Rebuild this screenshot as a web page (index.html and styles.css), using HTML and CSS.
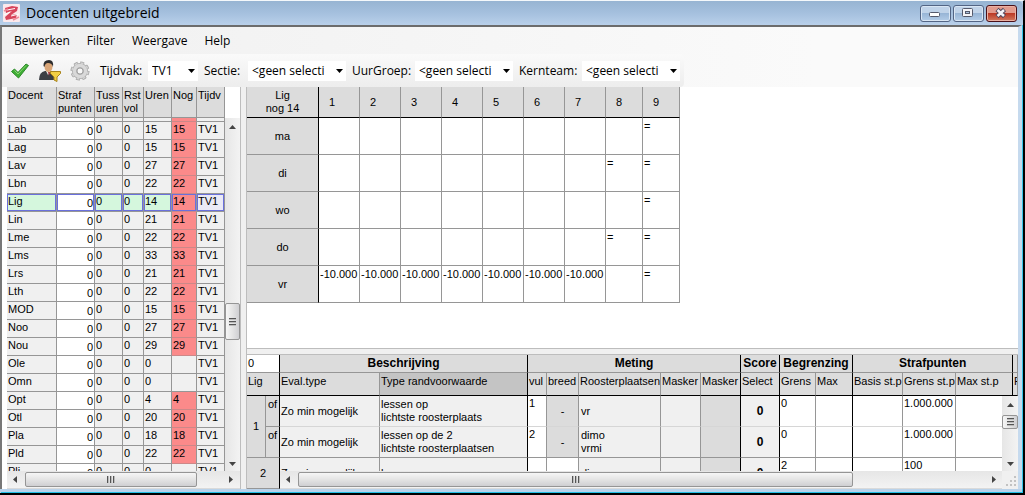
FILE: index.html
```html
<!DOCTYPE html>
<html lang="nl">
<head>
<meta charset="utf-8">
<title>Docenten uitgebreid</title>
<link rel="stylesheet" href="styles.css">
</head>
<body>
<div class="window">
  <header class="titlebar">
    <svg class="logo" viewBox="0 0 17 18" aria-hidden="true">
      <rect width="17" height="18" rx="1" fill="#fbe9ec"/>
      <path d="M2 4L9 2L15 3L14 7L8 11L14 10L13 14L3 16L2 13L9 7L3 9Z" fill="#d8455c"/>
      <path d="M1 11L7 8M8 12L16 10M4 6L12 4.500" stroke="#fff" stroke-width="1"/>
      <path d="M1 7L5 5M10 16L16 13" stroke="#ee8b9b" stroke-width="1.5"/>
    </svg>
    <h1 class="title">Docenten uitgebreid</h1>
    <div class="winbuttons">
      <button class="winbtn" aria-label="Minimaliseren"><svg viewBox="0 0 30 16"><rect x="9.500" y="7.500" width="10" height="4" rx="1" fill="#fff" stroke="#555a6c"/></svg></button>
      <button class="winbtn" aria-label="Maximaliseren"><svg viewBox="0 0 30 16"><rect x="9.500" y="3.500" width="10" height="8" rx="1" fill="#f4f4f8" stroke="#555a6c"/><rect x="12.500" y="6.500" width="4" height="2" fill="#a9c0dd" stroke="#555a6c"/></svg></button>
      <button class="winbtn winbtn-close" aria-label="Sluiten"><svg viewBox="0 0 30 16"><path d="M11 4.500L18.500 11.500M18.500 4.500L11 11.500" stroke="#51465a" stroke-width="4.500"/><path d="M11.500 5L18 11M18 5L11.500 11" stroke="#f4f4f8" stroke-width="2.500"/></svg></button>
    </div>
  </header>

  <div class="client">
    <nav class="menubar">
      <button class="menu">Bewerken</button>
      <button class="menu">Filter</button>
      <button class="menu">Weergave</button>
      <button class="menu">Help</button>
    </nav>

    <div class="toolrow">
      <div class="toolbar">
        <button class="tool" aria-label="Toepassen"><svg width="20" height="18" viewBox="0 0 20 18"><path d="M1.500 9.500L4.500 7L8 10.500L16 2L18.500 3.500L8.500 16Z" fill="#3fae35" stroke="#2d8a2a"/><path d="M4.500 8.500L8 12L16 3.500" fill="none" stroke="#86d66f"/></svg></button>
        <button class="tool" aria-label="Docent filteren"><svg width="24" height="24" viewBox="0 0 24 24"><path d="M1 21Q1 13 7 12L14 12Q18 13 18 21Z" fill="#3c3f45"/><path d="M8 12L10 16L13 12Z" fill="#e8e8e8"/><path d="M10 13L11 17L12 13Z" fill="#a33"/><ellipse cx="10.500" cy="7.500" rx="4" ry="5.500" fill="#d9a577"/><path d="M5.500 7Q5 1 11 1Q16 1 15 8Q14 4 10 4Q7 4 6.500 8Z" fill="#2c2b2c"/><path d="M12.500 12.500H22.500V14.500L19 18V22.500L16 21V18L12.500 14.500Z" fill="#f2cf45" stroke="#a8831a"/></svg></button>
        <button class="tool" aria-label="Instellingen"><svg width="20" height="20" viewBox="0 0 20 20"><circle cx="10" cy="10" r="8" fill="none" stroke="#a3a3a3" stroke-width="3" stroke-dasharray="3.800 2.483"/><circle cx="10" cy="10" r="5.500" fill="none" stroke="#a8a8a8" stroke-width="5"/><circle cx="10" cy="10" r="5.500" fill="none" stroke="#d9d9d9" stroke-width="3.500"/><circle cx="10" cy="10" r="8" fill="none" stroke="#d4d4d4" stroke-width="1.500" stroke-dasharray="2.800 3.483" stroke-dashoffset="-.5"/><circle cx="10" cy="10" r="3" fill="#f7f7f7" stroke="#a3a3a3"/></svg></button>
        <div class="pick pick-tijdvak"><label for="tijdvak">Tijdvak:</label><span class="combo"><select id="tijdvak"><option>TV1</option></select><svg viewBox="0 0 7 4"><path d="M0 0H7L3.500 4Z"/></svg></span></div>
        <div class="pick pick-sectie"><label for="sectie">Sectie:</label><span class="combo"><select id="sectie"><option>&lt;geen selecti</option></select><svg viewBox="0 0 7 4"><path d="M0 0H7L3.500 4Z"/></svg></span></div>
        <div class="pick pick-groep"><label for="groep">UurGroep:</label><span class="combo"><select id="groep"><option>&lt;geen selecti</option></select><svg viewBox="0 0 7 4"><path d="M0 0H7L3.500 4Z"/></svg></span></div>
        <div class="pick pick-groep"><label for="team">Kernteam:</label><span class="combo"><select id="team"><option>&lt;geen selecti</option></select><svg viewBox="0 0 7 4"><path d="M0 0H7L3.500 4Z"/></svg></span></div>
      </div>
    </div>

    <main class="panes">
      <section class="side">
        <div class="side-body">
          <table class="grid teachers">
            <colgroup><col class="c-doc"><col class="c-straf"><col class="c-tuss"><col class="c-rst"><col class="c-uren"><col class="c-nog"><col class="c-tijdv"></colgroup>
            <thead><tr><th>Docent</th><th>Straf<br>punten</th><th>Tuss<br>uren</th><th>Rst<br>vol</th><th>Uren</th><th>Nog</th><th>Tijdv</th></tr></thead>
            <tbody>
              <tr class="strip"><td></td><td></td><td></td><td></td><td></td><td class="red"></td><td></td></tr>
              <tr><td>Lab</td><td>0</td><td>0</td><td>0</td><td>15</td><td class="red">15</td><td>TV1</td></tr>
              <tr><td>Lag</td><td>0</td><td>0</td><td>0</td><td>15</td><td class="red">15</td><td>TV1</td></tr>
              <tr><td>Lav</td><td>0</td><td>0</td><td>0</td><td>27</td><td class="red">27</td><td>TV1</td></tr>
              <tr><td>Lbn</td><td>0</td><td>0</td><td>0</td><td>22</td><td class="red">22</td><td>TV1</td></tr>
              <tr class="selected"><td>Lig</td><td>0</td><td>0</td><td>0</td><td>14</td><td class="red">14</td><td>TV1</td></tr>
              <tr><td>Lin</td><td>0</td><td>0</td><td>0</td><td>21</td><td class="red">21</td><td>TV1</td></tr>
              <tr><td>Lme</td><td>0</td><td>0</td><td>0</td><td>22</td><td class="red">22</td><td>TV1</td></tr>
              <tr><td>Lms</td><td>0</td><td>0</td><td>0</td><td>33</td><td class="red">33</td><td>TV1</td></tr>
              <tr><td>Lrs</td><td>0</td><td>0</td><td>0</td><td>21</td><td class="red">21</td><td>TV1</td></tr>
              <tr><td>Lth</td><td>0</td><td>0</td><td>0</td><td>22</td><td class="red">22</td><td>TV1</td></tr>
              <tr><td>MOD</td><td>0</td><td>0</td><td>0</td><td>15</td><td class="red">15</td><td>TV1</td></tr>
              <tr><td>Noo</td><td>0</td><td>0</td><td>0</td><td>27</td><td class="red">27</td><td>TV1</td></tr>
              <tr><td>Nou</td><td>0</td><td>0</td><td>0</td><td>29</td><td class="red">29</td><td>TV1</td></tr>
              <tr><td>Ole</td><td>0</td><td>0</td><td>0</td><td>0</td><td></td><td>TV1</td></tr>
              <tr><td>Omn</td><td>0</td><td>0</td><td>0</td><td>0</td><td></td><td>TV1</td></tr>
              <tr><td>Opt</td><td>0</td><td>0</td><td>0</td><td>4</td><td class="red">4</td><td>TV1</td></tr>
              <tr><td>Otl</td><td>0</td><td>0</td><td>0</td><td>20</td><td class="red">20</td><td>TV1</td></tr>
              <tr><td>Pla</td><td>0</td><td>0</td><td>0</td><td>18</td><td class="red">18</td><td>TV1</td></tr>
              <tr><td>Pld</td><td>0</td><td>0</td><td>0</td><td>22</td><td class="red">22</td><td>TV1</td></tr>
              <tr><td>Pli</td><td>0</td><td>0</td><td>0</td><td>0</td><td></td><td>TV1</td></tr>
            </tbody>
          </table>
          <div class="vscroll vscroll-side">
            <svg class="arrow" viewBox="0 0 7 4"><path d="M0 4L3.500 0L7 4Z"/></svg>
            <div class="track side-track"><div class="vthumb side-thumb"><i></i><i></i><i></i></div></div>
            <svg class="arrow" viewBox="0 0 7 4"><path d="M0 0H7L3.500 4Z"/></svg>
          </div>
        </div>
        <div class="hscroll side-hscroll">
          <svg class="harrow" viewBox="0 0 4 7"><path d="M4 0V7L0 3.500Z"/></svg>
          <div class="htrack side-htrack"><div class="hthumb"><i></i><i></i><i></i></div></div>
          <svg class="harrow" viewBox="0 0 4 7"><path d="M0 0V7L4 3.500Z"/></svg>
        </div>
      </section>

      <div class="splitter"></div>

      <section class="content">
        <div class="roster">
          <table class="grid week">
            <colgroup><col class="w-day"><col class="w-hour" span="7"><col class="w-late" span="2"></colgroup>
            <thead><tr><th class="day">Lig<br>nog 14</th><th>1</th><th>2</th><th>3</th><th>4</th><th>5</th><th>6</th><th>7</th><th>8</th><th>9</th></tr></thead>
            <tbody>
              <tr><th class="day">ma</th><td></td><td></td><td></td><td></td><td></td><td></td><td></td><td></td><td>=</td></tr>
              <tr><th class="day">di</th><td></td><td></td><td></td><td></td><td></td><td></td><td></td><td>=</td><td>=</td></tr>
              <tr><th class="day">wo</th><td></td><td></td><td></td><td></td><td></td><td></td><td></td><td></td><td>=</td></tr>
              <tr><th class="day">do</th><td></td><td></td><td></td><td></td><td></td><td></td><td></td><td>=</td><td>=</td></tr>
              <tr><th class="day">vr</th><td>-10.000</td><td>-10.000</td><td>-10.000</td><td>-10.000</td><td>-10.000</td><td>-10.000</td><td>-10.000</td><td></td><td>=</td></tr>
            </tbody>
          </table>
        </div>

        <div class="hsplitter"></div>

        <div class="rules">
          <table class="grid rules-head">
            <colgroup><col class="r-num"><col class="r-eval"><col class="r-type"><col class="r-vul"><col class="r-breed"><col class="r-plaats"><col class="r-mask" span="2"><col class="r-score"><col class="r-grens"><col class="r-max"><col class="r-basis"><col class="r-gst"><col class="r-mst"><col></colgroup>
            <thead>
              <tr class="groups"><th class="count">0</th><th colspan="2" class="edge">Beschrijving</th><th colspan="5" class="edge">Meting</th><th class="edge">Score</th><th colspan="2" class="edge">Begrenzing</th><th colspan="3" class="edge">Strafpunten</th><th></th></tr>
              <tr class="names"><th class="edge">Lig</th><th>Eval.type</th><th class="edge sorted">Type randvoorwaarde</th><th>vul</th><th>breed</th><th>Roosterplaatsen</th><th>Masker</th><th class="edge">Masker</th><th class="edge">Select</th><th>Grens</th><th class="edge">Max</th><th>Basis st.p</th><th>Grens st.p</th><th class="edge">Max st.p</th><th>F</th></tr>
            </thead>
          </table>
          <div class="rules-body">
            <table class="grid numbers">
              <colgroup><col class="n-num"><col class="n-of"></colgroup>
              <tbody>
                <tr><th rowspan="2">1</th><th class="of edge">of</th></tr>
                <tr><th class="of edge">of</th></tr>
                <tr><th colspan="2" class="edge">2</th></tr>
              </tbody>
            </table>
            <div class="rules-main">
              <div class="rules-view">
                <div class="clip">
                  <table class="grid rules-rows">
                    <colgroup><col class="r-eval"><col class="r-type"><col class="r-vul"><col class="r-breed"><col class="r-plaats"><col class="r-mask" span="2"><col class="r-score"><col class="r-grens"><col class="r-max"><col class="r-basis"><col class="r-gst"><col></colgroup>
                    <tbody>
                      <tr class="soft"><td>Zo min mogelijk</td><td class="edge">lessen op<br>lichtste roosterplaats</td><td class="edit">1</td><td class="off">-</td><td class="place">vr</td><td></td><td class="off edge"></td><td class="score edge">0</td><td class="edit">0</td><td class="edit edge"></td><td class="edit"></td><td class="edit">1.000.000</td><td class="edit last"></td></tr>
                      <tr><td>Zo min mogelijk</td><td class="edge">lessen op de 2<br>lichtste roosterplaatsen</td><td class="edit">2</td><td class="off">-</td><td class="place">dimo<br>vrmi</td><td></td><td class="off edge"></td><td class="score edge">0</td><td class="edit">0</td><td class="edit edge"></td><td class="edit"></td><td class="edit">1.000.000</td><td class="edit last"></td></tr>
                      <tr><td>Zo min mogelijk</td><td class="edge">lessen</td><td class="edit"></td><td class="edit"></td><td class="place">di</td><td></td><td class="off edge"></td><td class="score edge">0</td><td class="edit">2</td><td class="edit edge"></td><td class="edit"></td><td class="edit">100</td><td class="edit last"></td></tr>
                    </tbody>
                  </table>
                </div>
                <div class="vscroll">
                  <svg class="arrow" viewBox="0 0 7 4"><path d="M0 4L3.500 0L7 4Z"/></svg>
                  <div class="track"><div class="vthumb"><i></i><i></i><i></i></div></div>
                  <svg class="arrow" viewBox="0 0 7 4"><path d="M0 0H7L3.500 4Z"/></svg>
                </div>
              </div>
              <div class="rules-foot">
                <div class="hscroll">
                  <svg class="harrow" viewBox="0 0 4 7"><path d="M4 0V7L0 3.500Z"/></svg>
                  <div class="htrack"><div class="hthumb rules-thumb"><i></i><i></i><i></i></div></div>
                  <svg class="harrow" viewBox="0 0 4 7"><path d="M0 0V7L4 3.500Z"/></svg>
                </div>
                <svg class="grip" viewBox="0 0 16 16" aria-hidden="true"><path d="M12 4h2v2h-2zM8 8h2v2h-2zM12 8h2v2h-2zM4 12h2v2h-2zM8 12h2v2h-2zM12 12h2v2h-2z"/></svg>
              </div>
            </div>
          </div>
        </div>
      </section>
    </main>
  </div>
</div>
</body>
</html>
```

FILE: styles.css
```css
* { box-sizing: border-box; }

body {
  margin: 0;
  background: #000;
  font: 11px/13px "Liberation Sans", Arial, sans-serif;
  color: #000;
}

button, select { font: inherit; color: inherit; }

/* Window frame */
.window {
  display: flex;
  flex-direction: column;
  height: 100vh;
  padding-bottom: 1px;
  border-top: 1px solid #f4f8fb;
  border-right: 2px solid #000;
  border-bottom: 2px solid #000;
  background: #b9d2ea;
}

.titlebar {
  display: flex;
  flex: none;
  align-items: center;
  height: 24px;
  padding: 0 6px 0 3px;
  border-radius: 0 5px 0 0;
  background: linear-gradient(#97b4d2, #a5c0de 50%, #b9d0ea);
}

.logo { width: 17px; height: 18px; }

.title {
  flex: 1;
  margin: 0 0 0 6px;
  font: 14px/20px "Open Sans", "Noto Sans", sans-serif;
}

.winbuttons { display: flex; gap: 2px; }

.winbtn {
  width: 31px;
  height: 17px;
  padding: 0;
  border: 1px solid #536585;
  border-radius: 3px;
  background: linear-gradient(#c0d3e9 45%, #98b5d6 50%, #b4cde8);
  box-shadow: inset 0 0 0 1px #d9e6f4;
}

.winbtn svg { display: block; width: 30px; height: 16px; margin: -1px; fill: none; }

.winbtn-close {
  border-color: #4a1018;
  background: linear-gradient(#e29a8c 45%, #bc3a26 50%, #d27a5e);
  box-shadow: inset 0 0 0 1px #eab0a2;
}

.client {
  display: flex;
  flex: 1;
  flex-direction: column;
  min-height: 0;
  margin-bottom: 3px;
  margin-right: 1px;
  border-top: 2px solid #6c6c6c;
  border-left: 2px solid #777;
  border-right: 4px solid #c6daee;
  background: #fff;
  box-shadow: 1px 0 #35c3e8, 0 3px #b9d2ea, 1px 4px #22bfe6;
}

/* Menu and toolbar */
.menubar {
  display: flex;
  flex: none;
  gap: 17px;
  height: 27px;
  padding-left: 12px;
  background: linear-gradient(90deg, #f0f0f0, #fafafa 80%);
}

.menu {
  padding: 0;
  border: 0;
  background: none;
  font: 12px/27px "Open Sans", "Noto Sans", sans-serif;
}

.toolrow {
  flex: none;
  background: linear-gradient(90deg, #f0f0f0, #fafafa 80%);
}

.toolbar {
  display: flex;
  align-items: center;
  gap: 6px;
  width: max-content;
  height: 33px;
  padding: 0 4px 0 6px;
  border-radius: 0 4px 4px 0;
  background: linear-gradient(#fafafa, #ededed);
  font: 12px/20px "Open Sans", "Noto Sans", sans-serif;
}

.tool {
  display: grid;
  place-items: center;
  width: 24px;
  height: 26px;
  padding: 0;
  border: 0;
  background: none;
}

.tool svg { display: block; }

.pick { display: flex; justify-content: space-between; align-items: center; }
.pick-tijdvak { width: 98px; margin-left: 2px; }
.pick-sectie { width: 142px; }
.pick-groep { width: 161px; }

.combo { display: flex; align-items: center; background: #fff; padding-right: 3px; }
.combo select {
  appearance: none;
  width: 84px;
  height: 20px;
  padding: 0 0 0 4px;
  border: 0;
  background: #fff;
}
.pick-tijdvak select { width: 36px; }
.combo svg { width: 7px; height: 4px; margin: 0 0 0 4px; }

/* Panes */
.panes { display: flex; flex: 1; min-height: 0; }

.side { display: flex; flex: none; flex-direction: column; padding-left: 5px; }
.side-body { display: flex; flex: 1; min-height: 0; overflow: hidden; }
.splitter { flex: none; width: 7px; border: solid #bdbdbd; border-width: 0 1px; background: #f0f0f0; }
.content { display: flex; flex: 1; flex-direction: column; min-width: 0; }

/* Shared grid look */
.grid { table-layout: fixed; border-collapse: separate; border-spacing: 0; }
.grid th, .grid td {
  padding: 0 1px;
  border: solid #969696;
  border-width: 0 1px 1px 0;
  font-weight: normal;
  text-align: left;
  white-space: nowrap;
  overflow: hidden;
}
.grid th { background: #dcdcdc; }
.grid .edge { border-right-color: #000; }

/* Teacher list */
.teachers { width: 218px; height: max-content; }
.teachers th { height: 31px; padding-top: 2px; vertical-align: top; }
.teachers td { height: 18px; padding-bottom: 2px; background: #f0f0f0; line-height: 15px; }
.teachers td:nth-child(2) { padding: 1px 1px 0 0; background: #fff; text-align: right; }
.teachers .strip td { height: 4px; padding: 0; line-height: 0; }
.teachers .red { background: #fb8a8a; border-bottom-color: #c88; }
.teachers .selected td { box-shadow: inset 0 0 0 1px #6a70dc; background: #d5f7dd; }
.teachers .selected td:nth-child(2) { background: #fff; }
.teachers .selected td:last-child { background: #eaeaf6; }
.teachers .selected .red { background: #fb8a8a; }
.c-doc { width: 50px; }
.c-straf { width: 38px; }
.c-tuss { width: 28px; }
.c-rst { width: 21px; }
.c-uren { width: 28px; }
.c-nog { width: 25px; }
.c-tijdv { width: 28px; }

/* Week roster */
.roster { flex: 1; min-height: 0; overflow: hidden; }
.week { width: 433px; }
.week th { height: 31px; padding-left: 10px; }
.week thead th { border-bottom-color: #000; }
.week td { height: 37px; padding-top: 2px; vertical-align: top; }
.grid .day { padding: 0; border-right-color: #000; text-align: center; }
.w-day { width: 72px; }
.w-hour { width: 41px; }
.w-late { width: 37px; }

.hsplitter { flex: none; height: 7px; border: solid #bdbdbd; border-width: 1px 0; background: #f0f0f0; }

/* Constraint table */
.rules { flex: none; }
.rules-head { width: 100%; }
.rules-head .groups th { height: 18px; font-size: 12px; font-weight: bold; text-align: center; }
.rules-head .groups .count { border-right-color: #000; background: #fff; font-size: 11px; font-weight: normal; text-align: left; }
.rules-head .names th { height: 23px; padding-top: 2px; border-bottom-color: #000; vertical-align: top; }
.grid .sorted { background: #c4c4c4; }
.r-num { width: 33px; }
.r-eval { width: 100px; }
.r-type { width: 148px; }
.r-vul { width: 19px; }
.r-breed { width: 32px; }
.r-plaats { width: 82px; }
.r-mask { width: 40px; }
.r-score { width: 39px; }
.r-grens { width: 36px; }
.r-max { width: 37px; }
.r-basis { width: 50px; }
.r-gst { width: 53px; }
.r-mst { width: 57px; }

.rules-body { display: flex; height: 93px; overflow: hidden; }
.numbers { flex: none; width: 33px; }
.numbers th { height: 31px; text-align: center; }
.numbers .of { padding: 2px 0; vertical-align: top; }
.n-num { width: 19px; }
.n-of { width: 14px; }

.rules-main { display: flex; flex: 1; flex-direction: column; min-width: 0; }
.rules-view { display: flex; flex: 1; min-height: 0; }
.clip { flex: 1; min-width: 0; overflow: hidden; }
.rules-rows { width: 100%; }
.rules-rows td { height: 31px; background: #f0f0f0; }
.rules-rows .soft td { border-bottom-color: #d6d6d6; }
.rules-rows .edit { padding-top: 1px; background: #fff; vertical-align: top; }
.rules-rows .off { background: #dcdcdc; text-align: center; }
.rules-rows .place { padding-left: 2px; }
.rules-rows .score { font-size: 12px; font-weight: bold; text-align: center; }
.rules-rows .last { border-right: 0; }

/* Scrollbars */
.vscroll {
  display: flex;
  flex: none;
  flex-direction: column;
  align-items: center;
  width: 16px;
  padding: 7px 0 5px;
  background: linear-gradient(90deg, #e6e6e6, #f3f3f3);
}
.vscroll-side { width: 15px; margin-top: 31px; }
.arrow { flex: none; width: 7px; height: 4px; fill: #444; }
.track { flex: 1; width: 100%; padding-top: 8px; }
.side-track { padding-top: 174px; }
.vthumb {
  display: flex;
  flex-direction: column;
  justify-content: center;
  align-items: center;
  gap: 1px;
  height: 14px;
  border: 1px solid #959595;
  border-radius: 2px;
  background: linear-gradient(90deg, #f6f6f6, #e4e4e4 50%, #cfcfd2);
}
.vthumb i { width: 7px; height: 2px; border-top: 1px solid #555; background: #bbb; }
.side-thumb { height: 37px; }

.hscroll {
  display: flex;
  flex: 1;
  align-items: center;
  height: 18px;
  padding: 0 6px;
  border-bottom: 1px solid #dadada;
  background: linear-gradient(#e6e6e6, #f3f3f3);
}
.side-hscroll { flex: none; }
.harrow { flex: none; width: 4px; height: 7px; fill: #444; }
.htrack { flex: 1; padding: 0 0 0 8px; }
.side-htrack { padding-right: 32px; }
.side-hscroll { padding-right: 7px; }
.hthumb {
  display: flex;
  justify-content: center;
  align-items: center;
  gap: 1px;
  height: 15px;
  border: 1px solid #959595;
  border-radius: 2px;
  background: linear-gradient(#f6f6f6, #e4e4e4 50%, #cfcfd2);
}
.hthumb i { width: 2px; height: 7px; border-left: 1px solid #555; background: #bbb; }
.rules-thumb { width: 80%; }

.rules-foot { display: flex; flex: none; }
.grip { flex: none; width: 16px; height: 18px; fill: #c2c2c2; background: #f0f0f0; }
```
